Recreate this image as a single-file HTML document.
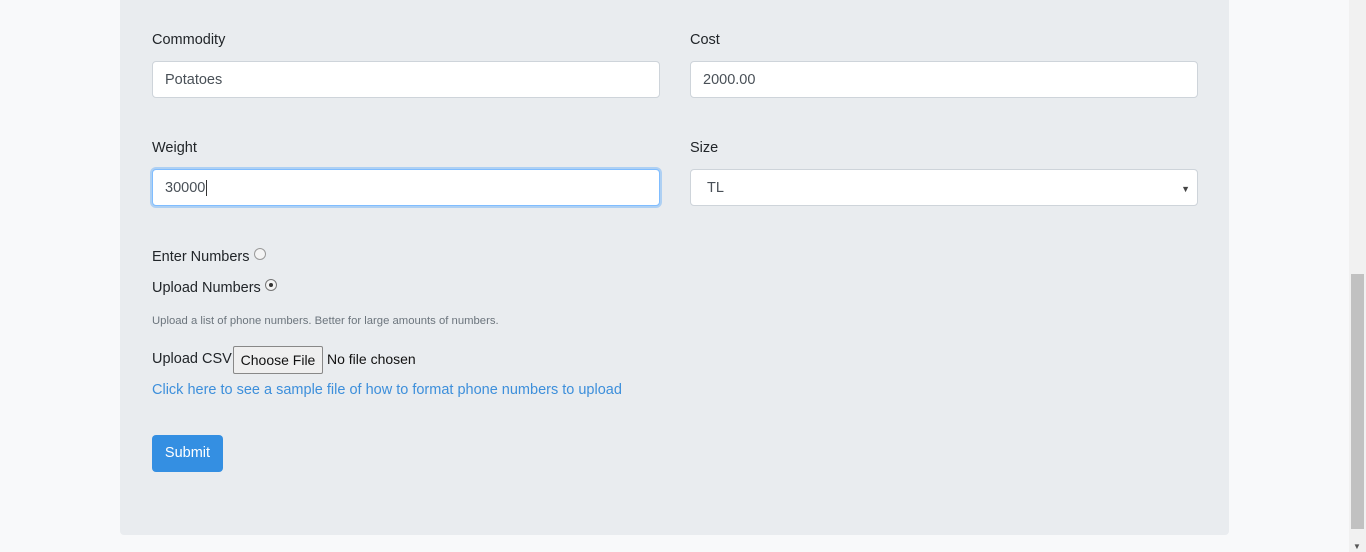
<!DOCTYPE html>
<html><head><style>
body{margin:0;width:1366px;height:552px;background:#f8f9fa;font-family:"Liberation Sans",sans-serif;position:relative;overflow:hidden;color:#212529}
.panel{position:absolute;left:120px;top:-10px;width:1109px;height:545px;background:#e9ecef;border-radius:4px}
.a{position:absolute;white-space:nowrap}
.lbl{font-size:14.5px;color:#212529}
.in{position:absolute;box-sizing:border-box;height:37px;background:#fff;border:1px solid #ced4da;border-radius:4px;font-size:14.5px;color:#495057;padding:9px 12px;line-height:18px}
.sb{position:absolute;left:1349px;top:0;width:17px;height:552px;background:#f1f1f1}
.th{position:absolute;left:1351px;top:274px;width:13px;height:255px;background:#c1c1c1}
</style></head><body>
<div class="panel"></div>
<div class="a lbl" style="left:152px;top:32px">Commodity</div>
<div class="a lbl" style="left:690px;top:32px">Cost</div>
<div class="in" style="left:152px;top:61px;width:508px">Potatoes</div>
<div class="in" style="left:690px;top:61px;width:508px">2000.00</div>
<div class="a lbl" style="left:152px;top:140px">Weight</div>
<div class="a lbl" style="left:690px;top:140px">Size</div>
<div class="in" style="left:152px;top:169px;width:508px;border-color:#80bdff;box-shadow:0 0 0 2px rgba(0,123,255,.25)">30000<span style="border-left:1px solid #333;margin-left:1px"></span></div>
<div class="in" style="left:690px;top:169px;width:508px;padding-left:16px">TL<span style="position:absolute;right:7px;top:10px;font-size:9px;color:#444">▼</span></div>
<div class="a lbl" style="left:152px;top:248px">Enter Numbers <span style="display:inline-block;width:10px;height:10px;border:1px solid #999;border-radius:50%;background:#f4f4f4;vertical-align:1px"></span></div>
<div class="a lbl" style="left:152px;top:279px">Upload Numbers <span style="display:inline-block;width:10px;height:10px;border:1px solid #777;border-radius:50%;background:#f4f4f4;vertical-align:1px;position:relative"><span style="position:absolute;left:3px;top:3px;width:4px;height:4px;border-radius:50%;background:#333"></span></span></div>
<div class="a" style="left:152px;top:315px;font-size:11.3px;color:#6c757d">Upload a list of phone numbers. Better for large amounts of numbers.</div>
<div class="a lbl" style="left:152px;top:351px">Upload CSV</div>
<div class="a" style="left:233px;top:346px;width:90px;height:28px;box-sizing:border-box;border:1px solid #888;background:#efefef;border-radius:2px;font-size:14px;text-align:center;line-height:26px;color:#111">Choose File</div>
<div class="a" style="left:327px;top:351px;font-size:14px;color:#111">No file chosen</div>
<div class="a" style="left:152px;top:382px;font-size:14.5px;color:#3d8fdb">Click here to see a sample file of how to format phone numbers to upload</div>
<div class="a" style="left:152px;top:435px;width:71px;height:37px;background:#348fe2;border-radius:4px;color:#fff;font-size:14.5px;text-align:center;line-height:37px">Submit</div>
<div class="sb"></div><div class="th"></div>
<div class="a" style="left:1353px;top:542px;font-size:8px;color:#555">▼</div>
</body></html>
